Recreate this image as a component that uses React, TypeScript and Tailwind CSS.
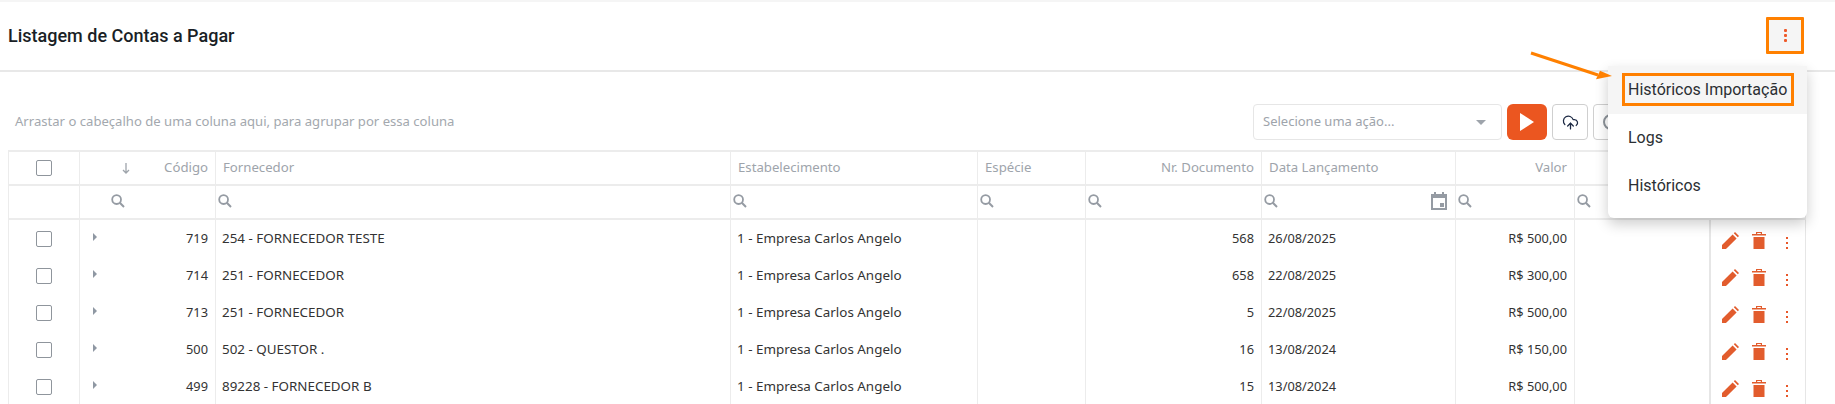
import { CloudUpload } from "lucide-react";

const GRID =
  "grid grid-cols-[71px_136px_515px_247px_108px_176px_194px_119px_136px_95px]";

const rows = [
  { id: 719, supplier: "254 - FORNECEDOR TESTE", doc: "568", date: "26/08/2025", value: "R$ 500,00" },
  { id: 714, supplier: "251 - FORNECEDOR", doc: "658", date: "22/08/2025", value: "R$ 300,00" },
  { id: 713, supplier: "251 - FORNECEDOR", doc: "5", date: "22/08/2025", value: "R$ 500,00" },
  { id: 500, supplier: "502 - QUESTOR .", doc: "16", date: "13/08/2024", value: "R$ 150,00" },
  { id: 499, supplier: "89228 - FORNECEDOR B", doc: "15", date: "13/08/2024", value: "R$ 500,00" },
];

const SearchIcon = () => (
  <svg width="14" height="14" viewBox="0 0 14 14" fill="none" className="text-[#959ba3]">
    <circle cx="5.6" cy="5.6" r="4.4" stroke="currentColor" strokeWidth="1.8" />
    <path d="M8.8 8.8 13 13" stroke="currentColor" strokeWidth="2" />
  </svg>
);

const CalendarIcon = () => (
  <svg width="16" height="18" viewBox="0 0 16 18" className="text-[#959ba3]">
    <path
      fillRule="evenodd"
      fill="currentColor"
      d="M3 0h2v2h6V0h2v2h3v16H0V2h3V0ZM2 6v10h12V6H2Zm7 5h4v4H9v-4Z"
    />
  </svg>
);

const Checkbox = () => (
  <div className="w-4 h-4 rounded-[2px] border border-[#8f959c] bg-white" />
);

const Kebab = ({ small }: { small?: boolean }) =>
  small ? (
    <div className="flex flex-col gap-[3px]">
      <span className="w-[2px] h-[2px] bg-[#e8582a]" />
      <span className="w-[2px] h-[2px] bg-[#e8582a]" />
      <span className="w-[2px] h-[2px] bg-[#e8582a]" />
    </div>
  ) : (
    <div className="flex flex-col gap-[2px]">
      <span className="w-[3px] h-[3px] rounded-[1px] bg-[#ee5a2a]" />
      <span className="w-[3px] h-[3px] rounded-[1px] bg-[#ee5a2a]" />
      <span className="w-[3px] h-[3px] rounded-[1px] bg-[#ee5a2a]" />
    </div>
  );

const Pencil = () => (
  <svg width="17" height="17" viewBox="0 0 17 17" fill="#e25c2d">
    <path d="M0 17v-4L10.600 2.400l4 4L4 17H0ZM11.800 1.200 13 0l4 4-1.200 1.200-4-4Z" />
  </svg>
);

const Trash = () => (
  <svg width="14" height="17" viewBox="0 0 14 17" fill="#e25c2d">
    <path
      fillRule="evenodd"
      d="M4 0h6v2h4v1.500H0V2h4V0Zm1.200 1v1h3.600V1H5.200ZM1.500 5h11v12h-11V5Z"
    />
  </svg>
);

const HeaderCell = ({ children, right }: { children?: React.ReactNode; right?: boolean }) => (
  <div
    className={`h-[34px] border-r border-b-2 border-[#ececec] flex items-center text-[13.200px] text-[#9ea4ab] ${
      right ? "justify-end pl-[6px] pr-[7px]" : "pl-[7px] pr-[6px]"
    }`}
  >
    {children}
  </div>
);

const FilterCell = ({ children }: { children?: React.ReactNode }) => (
  <div className="h-[34px] border-r border-b-2 border-[#ececec] flex items-center justify-between pl-[2px] pr-[8px] pb-[2px]">
    {children}
  </div>
);

const Cell = ({ children, right, text }: { children?: React.ReactNode; right?: boolean; text?: boolean }) => (
  <div
    className={`h-[37px] border-r border-[#ececec] pt-[9px] leading-[18px] text-[#333] ${
      right ? "text-right pl-[6px] pr-[7px]" : "pl-[6px] pr-[6px]"
    } ${text ? "text-[13.400px]" : "text-[12.800px]"}`}
  >
    {children}
  </div>
);

export default function App() {
  return (
    <div className="relative w-[1835px] h-[404px] overflow-hidden bg-white font-['Noto_Sans',sans-serif] text-[13px]">
      <div className="h-[2px] bg-[#f5f5f5]" />

      <div className="h-[70px] border-b-2 border-[#e8e8e8] flex items-center justify-between pl-2 pr-[31px] pb-[1px]">
        <h1 className="font-['Roboto',sans-serif] font-medium text-[18px] text-[#1a1f26]">
          Listagem de Contas a Pagar
        </h1>
        <button className="w-[38px] h-[37px] flex items-center justify-center rounded-[1px] border-[3px] border-[#ff8000] bg-[#f5f5f5]">
          <Kebab />
        </button>
      </div>

      <div className="flex items-center justify-between h-[36px] mt-[32px] pl-[15px]">
        <span className="text-[13.100px] text-[#a3a8ae]">
          Arrastar o cabeçalho de uma coluna aqui, para agrupar por essa coluna
        </span>
        <div className="flex items-center gap-[5px] w-[582px]">
          <div className="w-[249px] h-[36px] rounded border border-[#e6e6e6] flex items-center justify-between pl-[9px] pr-[15px] text-[#9ea4ab]">
            <span>Selecione uma ação...</span>
            <span className="w-0 h-0 border-x-[5px] border-x-transparent border-t-[5px] border-t-[#9ea4ab]" />
          </div>
          <button className="w-10 h-[36px] rounded-md bg-[#eb5620] flex items-center justify-center">
            <svg width="14" height="18" viewBox="0 0 14 18" fill="white">
              <path d="M0 0 14 9 0 18Z" />
            </svg>
          </button>
          <button className="w-[36px] h-[36px] rounded border border-[#cfcfcf] flex items-center justify-center">
            <CloudUpload size={17} strokeWidth={1.8} color="#1d2a44" />
          </button>
          <button className="w-[36px] h-[36px] rounded border border-[#cfcfcf] flex items-center justify-center">
            <span className="w-[16px] h-[16px] rounded-full border-2 border-[#8d939a]" />
          </button>
        </div>
      </div>

      <div className="ml-2 mt-[10px] w-[1797px] border-l border-t-2 border-[#ececec]">
        <div className={GRID}>
          <HeaderCell>
            <div className="w-full flex justify-center pr-[1px]">
              <Checkbox />
            </div>
          </HeaderCell>
          <HeaderCell right>
            <svg width="8" height="11" viewBox="0 0 8 11" fill="none" className="mr-[34px]">
              <path d="M4 0v10M1 7l3 3 3-3" stroke="#9ea4ab" strokeWidth="1.300" />
            </svg>
            Código
          </HeaderCell>
          <HeaderCell>Fornecedor</HeaderCell>
          <HeaderCell>Estabelecimento</HeaderCell>
          <HeaderCell>Espécie</HeaderCell>
          <HeaderCell right>Nr. Documento</HeaderCell>
          <HeaderCell>Data Lançamento</HeaderCell>
          <HeaderCell right>Valor</HeaderCell>
          <HeaderCell />
          <HeaderCell />

          <FilterCell />
          <FilterCell>
            <span className="ml-[29px]">
              <SearchIcon />
            </span>
          </FilterCell>
          <FilterCell>
            <SearchIcon />
          </FilterCell>
          <FilterCell>
            <SearchIcon />
          </FilterCell>
          <FilterCell>
            <SearchIcon />
          </FilterCell>
          <FilterCell>
            <SearchIcon />
          </FilterCell>
          <FilterCell>
            <SearchIcon />
            <CalendarIcon />
          </FilterCell>
          <FilterCell>
            <SearchIcon />
          </FilterCell>
          <FilterCell>
            <SearchIcon />
          </FilterCell>
          <FilterCell />

          {rows.map((r) => (
            <div key={r.id} className="contents">
              <div className="h-[37px] border-r border-[#ececec] flex justify-center pt-[11px] pr-[1px]">
                <Checkbox />
              </div>
              <div className="h-[37px] border-r border-[#ececec] flex justify-between pl-[13px] pr-[7px] pt-[9px] leading-[18px] text-[12.800px] text-[#333]">
                <span className="mt-[4px] w-0 h-0 border-y-[4px] border-y-transparent border-l-[4px] border-l-[#8f98a3]" />
                {r.id}
              </div>
              <Cell text>{r.supplier}</Cell>
              <Cell text>1 - Empresa Carlos Angelo</Cell>
              <Cell />
              <Cell right>{r.doc}</Cell>
              <Cell>{r.date}</Cell>
              <Cell right>{r.value}</Cell>
              <Cell />
              <div className="h-[37px] border-l-2 -ml-[2px] border-r border-[#e6e6e6] flex items-start pl-[11px] pt-[12px]">
                <Pencil />
                <span className="ml-[13px]">
                  <Trash />
                </span>
                <span className="ml-[20px] mt-[5px]">
                  <Kebab small />
                </span>
              </div>
            </div>
          ))}
        </div>
      </div>

      {/* menu aberto */}
      <div className="absolute left-[1608px] top-[66px] w-[199px] h-[152px] bg-white rounded-b-md shadow-[0_6px_14px_rgba(0,0,0,0.2)] font-['Roboto',sans-serif] text-[16px] text-[#2b2f33]">
        <div className="h-[48px] bg-[#f5f5f5] flex items-center pl-[20px]">Históricos Importação</div>
        <div className="h-[48px] flex items-center pl-[20px]">Logs</div>
        <div className="h-[48px] flex items-center pl-[20px]">Históricos</div>
        <div className="absolute left-[14px] top-[7px] w-[172px] h-[33px] border-[3px] border-[#ff8000]" />
      </div>

      {/* seta da anotacao */}
      <svg className="absolute left-[1525px] top-[45px]" width="95" height="45" viewBox="0 0 95 45">
        <path d="M6 8 73 30" stroke="#ff8000" strokeWidth="3" />
        <path d="M87 31 71 34.300 75 25.700Z" fill="#ff8000" />
      </svg>
    </div>
  );
}
